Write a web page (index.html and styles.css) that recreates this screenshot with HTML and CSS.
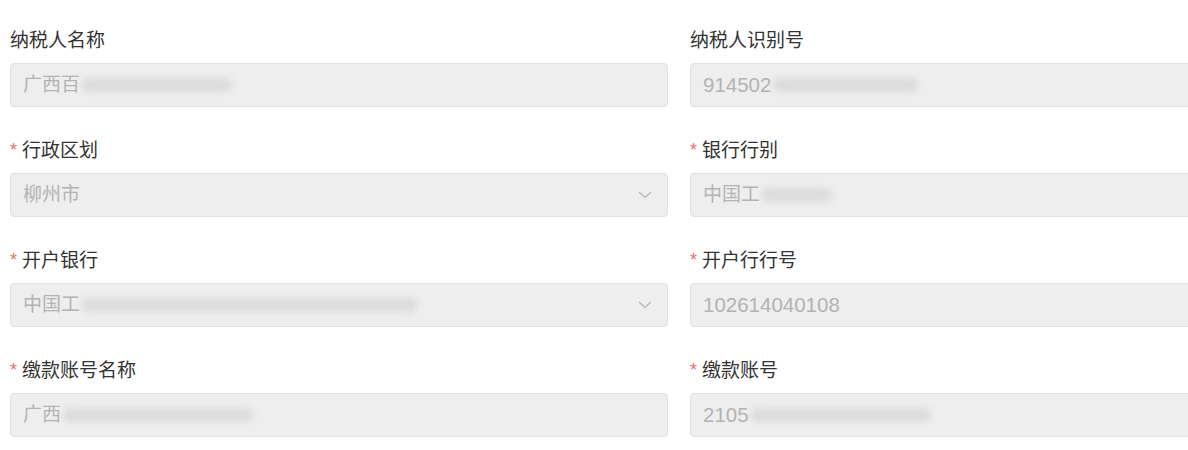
FILE: index.html
```html
<!DOCTYPE html>
<html lang="zh-CN">
<head>
<meta charset="utf-8">
<title>表单</title>
<link rel="stylesheet" href="styles.css">
</head>
<body>
<div class="form">
  <div class="field">
    <div class="label">纳税人名称</div>
    <div class="input"><span class="val">广西百</span><span class="blur" style="width:150px"></span></div>
  </div>
  <div class="field">
    <div class="label">纳税人识别号</div>
    <div class="input"><span class="val num">914502</span><span class="blur" style="width:145px"></span></div>
  </div>
  <div class="field">
    <div class="label"><span class="req">*</span>行政区划</div>
    <div class="input select"><span class="val">柳州市</span><svg class="chev" width="14" height="8" viewBox="0 0 14 8"><path d="M1 1 L7 6.5 L13 1" fill="none" stroke="#b4b4b4" stroke-width="1.2"/></svg></div>
  </div>
  <div class="field">
    <div class="label"><span class="req">*</span>银行行别</div>
    <div class="input"><span class="val">中国工</span><span class="blur" style="width:70px"></span></div>
  </div>
  <div class="field">
    <div class="label"><span class="req">*</span>开户银行</div>
    <div class="input select"><span class="val">中国工</span><span class="blur" style="width:335px"></span><svg class="chev" width="14" height="8" viewBox="0 0 14 8"><path d="M1 1 L7 6.5 L13 1" fill="none" stroke="#b4b4b4" stroke-width="1.2"/></svg></div>
  </div>
  <div class="field">
    <div class="label"><span class="req">*</span>开户行行号</div>
    <div class="input"><span class="val num">102614040108</span></div>
  </div>
  <div class="field">
    <div class="label"><span class="req">*</span>缴款账号名称</div>
    <div class="input"><span class="val">广西</span><span class="blur" style="width:190px"></span></div>
  </div>
  <div class="field">
    <div class="label"><span class="req">*</span>缴款账号</div>
    <div class="input"><span class="val num">2105</span><span class="blur" style="width:180px"></span></div>
  </div>
</div>
</body>
</html>
```
FILE: styles.css
```css
html, body {
  margin: 0;
  padding: 0;
  background: #ffffff;
  overflow: hidden;
}
body {
  font-family: "Liberation Sans", "Noto Sans CJK SC", sans-serif;
  color: #333333;
}
.form {
  display: grid;
  grid-template-columns: 658px 658px;
  column-gap: 22px;
  row-gap: 33px;
  padding: 30px 0 0 10px;
  width: 1400px;
}
.field {
  display: flex;
  flex-direction: column;
  gap: 11px;
}
.label {
  font-size: 19px;
  line-height: 22px;
  height: 22px;
  color: #333333;
  display: flex;
  align-items: center;
}
.req {
  color: #e07070;
  font-size: 18px;
  margin-right: 5px;
  line-height: 22px;
  position: relative;
  top: -1px;
}
.input {
  box-sizing: border-box;
  height: 44px;
  background: #eeeeee;
  border: 1px solid #e1e1e1;
  border-radius: 4px;
  display: flex;
  align-items: center;
  padding: 0 12px;
  font-size: 19px;
  color: #b3b3b3;
}
.val {
  line-height: 22px;
  white-space: nowrap;
}
.num {
  font-size: 20.5px;
}
.blur {
  height: 14px;
  background: #dcdcdc;
  border-radius: 6px;
  filter: blur(3px);
  margin-left: 2px;
}
.select {
  position: relative;
}
.chev {
  margin-left: auto;
  margin-right: 3px;
}
```
